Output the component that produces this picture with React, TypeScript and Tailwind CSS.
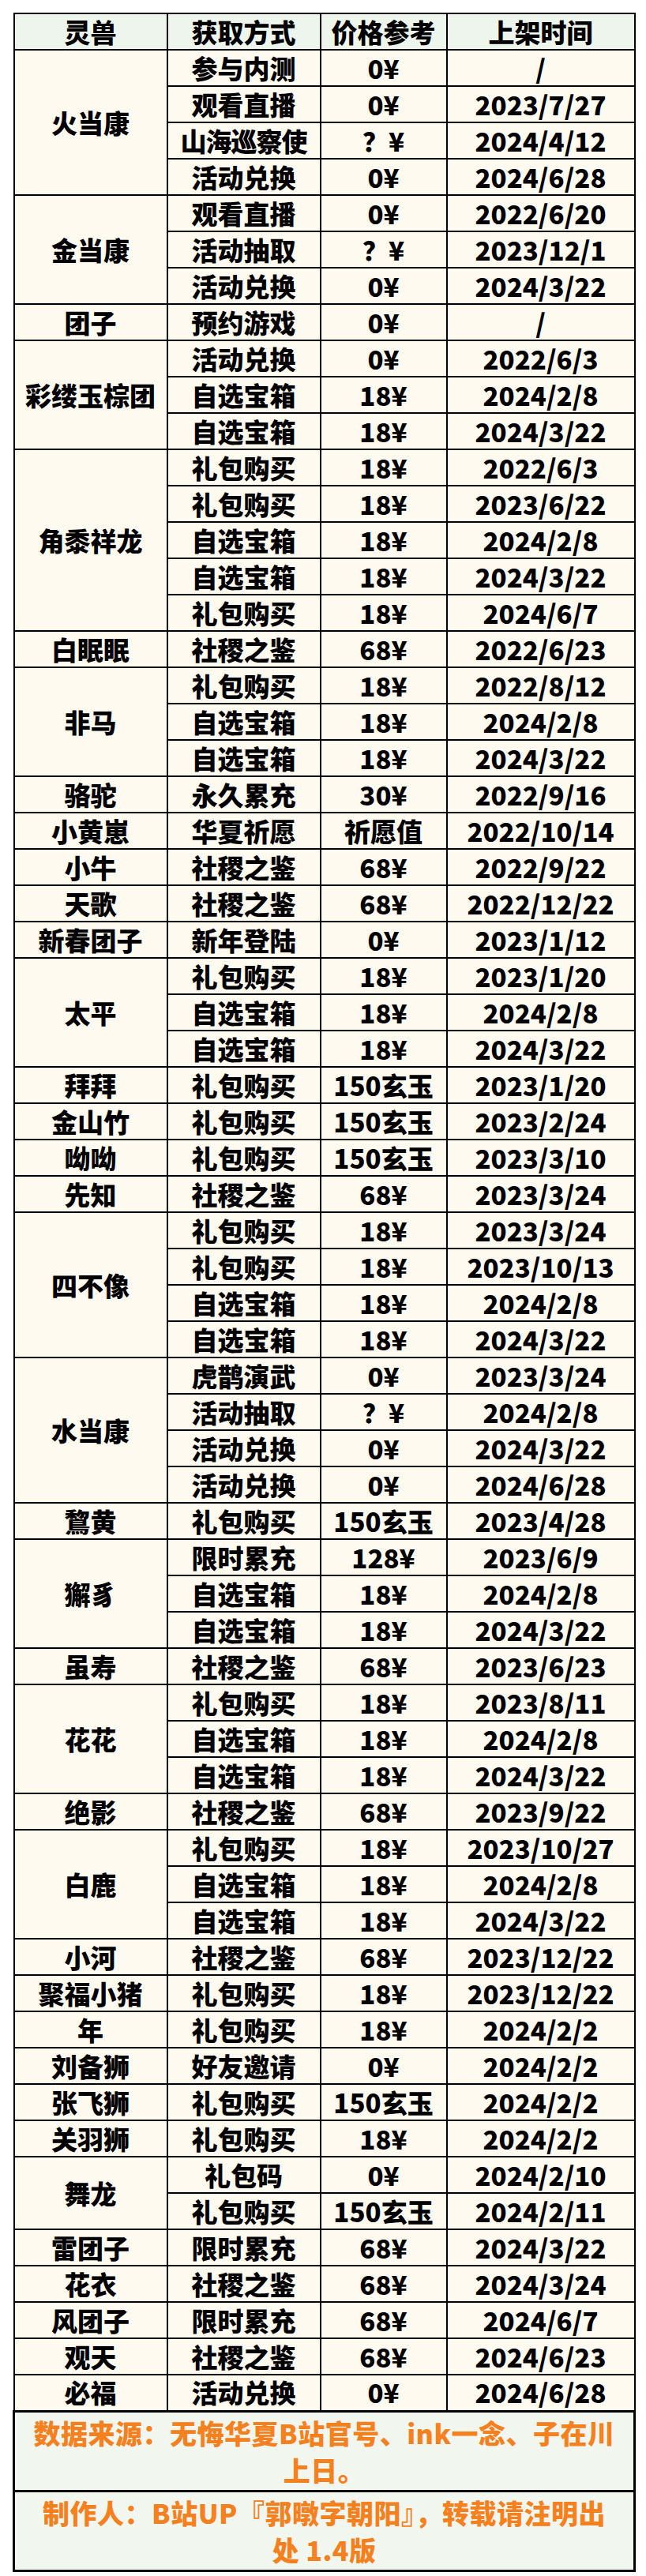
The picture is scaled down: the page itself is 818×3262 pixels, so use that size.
type Entry = { method: string; price: string; date: string }
type Beast = { name: string; rows: Entry[] }

const r = (method: string, price: string, date: string): Entry => ({ method, price, date })

const beasts: Beast[] = [
  {
    name: '火当康',
    rows: [
      r('参与内测', '0¥', '/'),
      r('观看直播', '0¥', '2023/7/27'),
      r('山海巡察使', '？¥', '2024/4/12'),
      r('活动兑换', '0¥', '2024/6/28'),
    ],
  },
  {
    name: '金当康',
    rows: [r('观看直播', '0¥', '2022/6/20'), r('活动抽取', '？¥', '2023/12/1'), r('活动兑换', '0¥', '2024/3/22')],
  },
  { name: '团子', rows: [r('预约游戏', '0¥', '/')] },
  {
    name: '彩缕玉棕团',
    rows: [r('活动兑换', '0¥', '2022/6/3'), r('自选宝箱', '18¥', '2024/2/8'), r('自选宝箱', '18¥', '2024/3/22')],
  },
  {
    name: '角黍祥龙',
    rows: [
      r('礼包购买', '18¥', '2022/6/3'),
      r('礼包购买', '18¥', '2023/6/22'),
      r('自选宝箱', '18¥', '2024/2/8'),
      r('自选宝箱', '18¥', '2024/3/22'),
      r('礼包购买', '18¥', '2024/6/7'),
    ],
  },
  { name: '白眠眠', rows: [r('社稷之鉴', '68¥', '2022/6/23')] },
  {
    name: '非马',
    rows: [r('礼包购买', '18¥', '2022/8/12'), r('自选宝箱', '18¥', '2024/2/8'), r('自选宝箱', '18¥', '2024/3/22')],
  },
  { name: '骆驼', rows: [r('永久累充', '30¥', '2022/9/16')] },
  { name: '小黄崽', rows: [r('华夏祈愿', '祈愿值', '2022/10/14')] },
  { name: '小牛', rows: [r('社稷之鉴', '68¥', '2022/9/22')] },
  { name: '天歌', rows: [r('社稷之鉴', '68¥', '2022/12/22')] },
  { name: '新春团子', rows: [r('新年登陆', '0¥', '2023/1/12')] },
  {
    name: '太平',
    rows: [r('礼包购买', '18¥', '2023/1/20'), r('自选宝箱', '18¥', '2024/2/8'), r('自选宝箱', '18¥', '2024/3/22')],
  },
  { name: '拜拜', rows: [r('礼包购买', '150玄玉', '2023/1/20')] },
  { name: '金山竹', rows: [r('礼包购买', '150玄玉', '2023/2/24')] },
  { name: '呦呦', rows: [r('礼包购买', '150玄玉', '2023/3/10')] },
  { name: '先知', rows: [r('社稷之鉴', '68¥', '2023/3/24')] },
  {
    name: '四不像',
    rows: [
      r('礼包购买', '18¥', '2023/3/24'),
      r('礼包购买', '18¥', '2023/10/13'),
      r('自选宝箱', '18¥', '2024/2/8'),
      r('自选宝箱', '18¥', '2024/3/22'),
    ],
  },
  {
    name: '水当康',
    rows: [
      r('虎鹊演武', '0¥', '2023/3/24'),
      r('活动抽取', '？¥', '2024/2/8'),
      r('活动兑换', '0¥', '2024/3/22'),
      r('活动兑换', '0¥', '2024/6/28'),
    ],
  },
  { name: '鵹黄', rows: [r('礼包购买', '150玄玉', '2023/4/28')] },
  {
    name: '獬豸',
    rows: [r('限时累充', '128¥', '2023/6/9'), r('自选宝箱', '18¥', '2024/2/8'), r('自选宝箱', '18¥', '2024/3/22')],
  },
  { name: '虽寿', rows: [r('社稷之鉴', '68¥', '2023/6/23')] },
  {
    name: '花花',
    rows: [r('礼包购买', '18¥', '2023/8/11'), r('自选宝箱', '18¥', '2024/2/8'), r('自选宝箱', '18¥', '2024/3/22')],
  },
  { name: '绝影', rows: [r('社稷之鉴', '68¥', '2023/9/22')] },
  {
    name: '白鹿',
    rows: [r('礼包购买', '18¥', '2023/10/27'), r('自选宝箱', '18¥', '2024/2/8'), r('自选宝箱', '18¥', '2024/3/22')],
  },
  { name: '小河', rows: [r('社稷之鉴', '68¥', '2023/12/22')] },
  { name: '聚福小猪', rows: [r('礼包购买', '18¥', '2023/12/22')] },
  { name: '年', rows: [r('礼包购买', '18¥', '2024/2/2')] },
  { name: '刘备狮', rows: [r('好友邀请', '0¥', '2024/2/2')] },
  { name: '张飞狮', rows: [r('礼包购买', '150玄玉', '2024/2/2')] },
  { name: '关羽狮', rows: [r('礼包购买', '18¥', '2024/2/2')] },
  { name: '舞龙', rows: [r('礼包码', '0¥', '2024/2/10'), r('礼包购买', '150玄玉', '2024/2/11')] },
  { name: '雷团子', rows: [r('限时累充', '68¥', '2024/3/22')] },
  { name: '花衣', rows: [r('社稷之鉴', '68¥', '2024/3/24')] },
  { name: '风团子', rows: [r('限时累充', '68¥', '2024/6/7')] },
  { name: '观天', rows: [r('社稷之鉴', '68¥', '2024/6/23')] },
  { name: '必福', rows: [r('活动兑换', '0¥', '2024/6/28')] },
]

const cell = 'border-2 border-black p-0 text-center align-middle whitespace-nowrap'
const foot =
  'border-[3px] border-black px-2 py-[2px] text-center text-[34px] leading-[47px] tracking-[0.5px] text-[#f5801e]'

export default function App() {
  return (
    <div
      className="bg-white px-4 pt-4 pb-4 text-black"
      style={{ fontFamily: '"Noto Sans CJK SC", "Noto Sans", sans-serif' }}
    >
      <table className="w-[786px] table-fixed border-collapse text-[33px] leading-none font-black">
        <colgroup>
          <col className="w-[194px]" />
          <col className="w-[194px]" />
          <col className="w-[160px]" />
          <col className="w-[238px]" />
        </colgroup>
        <thead>
          <tr className="h-[46px] bg-[#eef5ec]">
            <th className={cell + ' font-black'}>灵兽</th>
            <th className={cell + ' font-black'}>获取方式</th>
            <th className={cell + ' font-black'}>价格参考</th>
            <th className={cell + ' font-black'}>上架时间</th>
          </tr>
        </thead>
        <tbody className="bg-[#fffaf0]">
          {beasts.map((b) =>
            b.rows.map((row, i) => (
              <tr key={b.name + i} className="h-[46px]">
                {i === 0 && (
                  <td rowSpan={b.rows.length} className={cell}>
                    {b.name}
                  </td>
                )}
                <td className={cell + (row.method.length > 4 ? ' tracking-[-1px]' : '')}>{row.method}</td>
                <td className={cell}>{row.price}</td>
                <td className={cell}>{row.date}</td>
              </tr>
            )),
          )}
          <tr className="bg-[#f1f6ef]">
            <td colSpan={4} className={foot}>
              数据来源：无悔华夏B站官号、ink一念、子在川
              <br />
              上日。
            </td>
          </tr>
          <tr className="bg-[#f1f6ef]">
            <td colSpan={4} className={foot}>
              制作人：B站UP『郭暾字朝阳』，转载请注明出
              <br />处 1.4版
            </td>
          </tr>
        </tbody>
      </table>
    </div>
  )
}
